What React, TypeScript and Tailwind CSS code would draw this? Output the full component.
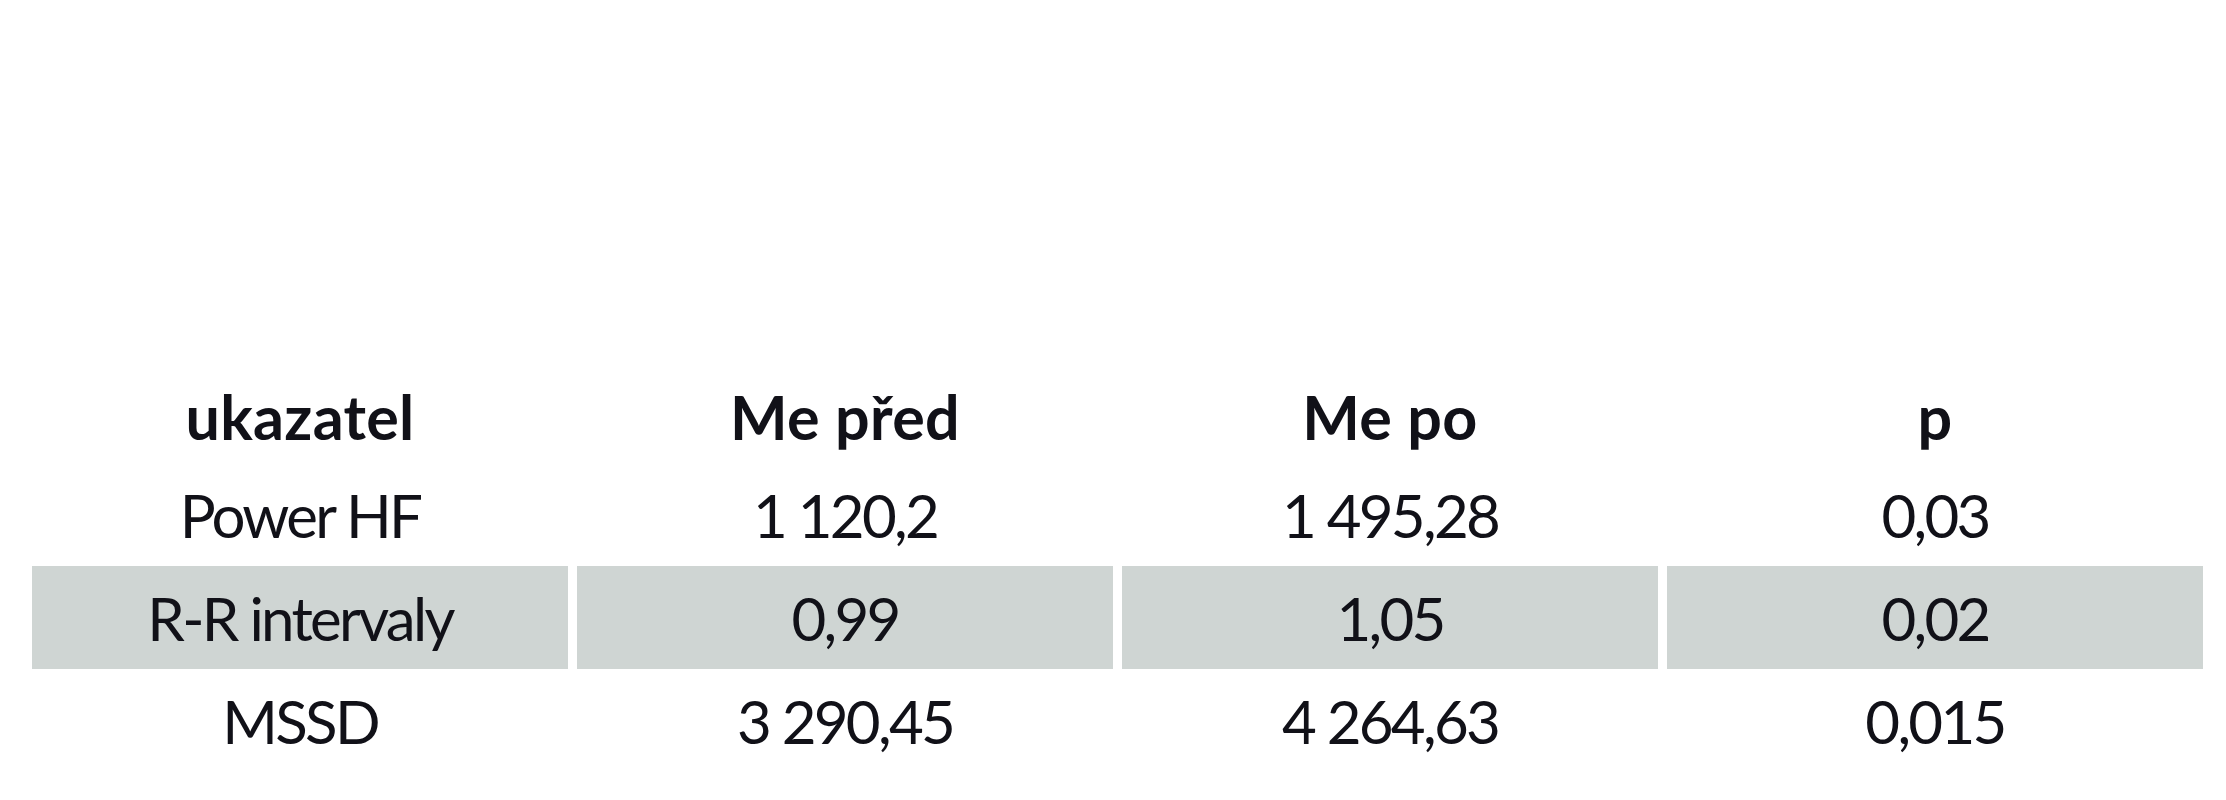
import React from "react";

const header = ["ukazatel", "Me před", "Me po", "p"];
const rows: { cells: string[]; shaded: boolean }[] = [
  { cells: ["Power HF", "1 120,2", "1 495,28", "0,03"], shaded: false },
  { cells: ["R-R intervaly", "0,99", "1,05", "0,02"], shaded: true },
  { cells: ["MSSD", "3 290,45", "4 264,63", "0,015"], shaded: false },
];

export default function App() {
  return (
    <div
      className="w-[2226px] h-[800px] bg-white pt-[360px] pl-[32px] pr-[23px] text-[#111118]"
      style={{ fontFamily: "Lato, 'Open Sans', 'Noto Sans', sans-serif" }}
    >
      <div className="grid grid-cols-4 gap-x-[9px]">
        {header.map((h) => (
          <div
            key={h}
            className="h-[103px] pt-[10px] flex items-center justify-center text-[61px] font-bold tracking-[0.005em] leading-none"
          >
            {h}
          </div>
        ))}
        {rows.map((r) =>
          r.cells.map((c, i) => (
            <div
              key={r.cells[0] + i}
              className={
                r.shaded
                  ? "h-[103px] flex items-center justify-center text-[60px] font-normal tracking-[-0.045em] leading-none bg-[#cfd5d3]"
                  : "h-[103px] flex items-center justify-center text-[60px] font-normal tracking-[-0.045em] leading-none"
              }
            >
              {c}
            </div>
          ))
        )}
      </div>
    </div>
  );
}
